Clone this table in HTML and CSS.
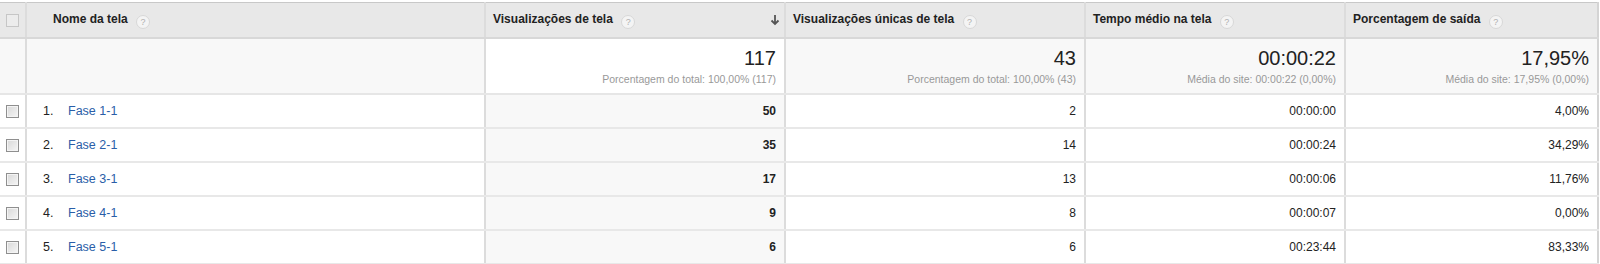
FILE: index.html
```html
<!DOCTYPE html>
<html>
<head>
<meta charset="utf-8">
<link rel="stylesheet" href="styles.css">
</head>
<body>
<table class="report">
  <colgroup>
    <col class="c-check"><col class="c-name"><col class="c-views"><col class="c-unique"><col class="c-time"><col class="c-exit">
  </colgroup>
  <thead>
    <tr class="head">
      <th class="chk"><span class="box box-head"></span></th>
      <th class="name-h">Nome da tela <span class="help">?</span></th>
      <th class="sorted-h"><div class="hwrap"><span>Visualizações de tela <span class="help">?</span></span><svg class="arrow" width="10" height="12" viewBox="0 0 10 12"><path d="M5 1v9M1.5 6.5L5 10l3.5-3.5" fill="none" stroke="#555" stroke-width="1.8"/></svg></div></th>
      <th>Visualizações únicas de tela <span class="help">?</span></th>
      <th>Tempo médio na tela <span class="help">?</span></th>
      <th>Porcentagem de saída <span class="help">?</span></th>
    </tr>
  </thead>
  <tbody>
    <tr class="totals">
      <td class="chk"></td>
      <td></td>
      <td class="sorted"><div class="big">117</div><div class="sub">Porcentagem do total: 100,00% (117)</div></td>
      <td><div class="big">43</div><div class="sub">Porcentagem do total: 100,00% (43)</div></td>
      <td><div class="big">00:00:22</div><div class="sub">Média do site: 00:00:22 (0,00%)</div></td>
      <td><div class="big">17,95%</div><div class="sub">Média do site: 17,95% (0,00%)</div></td>
    </tr>
    <tr class="row">
      <td class="chk"><span class="box"></span></td>
      <td class="name"><span class="idx">1.</span><a href="#">Fase 1-1</a></td>
      <td class="sorted num">50</td><td class="num">2</td><td class="num">00:00:00</td><td class="num">4,00%</td>
    </tr>
    <tr class="row">
      <td class="chk"><span class="box"></span></td>
      <td class="name"><span class="idx">2.</span><a href="#">Fase 2-1</a></td>
      <td class="sorted num">35</td><td class="num">14</td><td class="num">00:00:24</td><td class="num">34,29%</td>
    </tr>
    <tr class="row">
      <td class="chk"><span class="box"></span></td>
      <td class="name"><span class="idx">3.</span><a href="#">Fase 3-1</a></td>
      <td class="sorted num">17</td><td class="num">13</td><td class="num">00:00:06</td><td class="num">11,76%</td>
    </tr>
    <tr class="row">
      <td class="chk"><span class="box"></span></td>
      <td class="name"><span class="idx">4.</span><a href="#">Fase 4-1</a></td>
      <td class="sorted num">9</td><td class="num">8</td><td class="num">00:00:07</td><td class="num">0,00%</td>
    </tr>
    <tr class="row">
      <td class="chk"><span class="box"></span></td>
      <td class="name"><span class="idx">5.</span><a href="#">Fase 5-1</a></td>
      <td class="sorted num">6</td><td class="num">6</td><td class="num">00:23:44</td><td class="num">83,33%</td>
    </tr>
  </tbody>
</table>
</body>
</html>
```
FILE: styles.css
```css
html, body {
  margin: 0;
  padding: 0;
  background: #fff;
  font-family: "Liberation Sans", Arial, sans-serif;
  color: #222;
}
.report {
  margin-top: 2px;
  width: 1598px;
  border-collapse: collapse;
  table-layout: fixed;
  border-top: 1px solid #c8c8c8;
  border-right: 2px solid #d4d4d4;
}
.c-check { width: 26px; }
.c-name { width: 459px; }
.c-views { width: 300px; }
.c-unique { width: 300px; }
.c-time { width: 260px; }
.c-exit { width: 253px; }

th, td {
  padding: 0;
  border-left: 2px solid #dcdcdc;
}
th:first-child, td:first-child { border-left: none; }

.head th {
  height: 34px;
  background: #e8e8e8;
  border-bottom: 2px solid #d8d8d8;
  font-size: 12px;
  font-weight: bold;
  color: #222;
  text-align: left;
  padding-left: 7px;
  white-space: nowrap;
}
.head th.chk { padding-left: 0; text-align: center; }
.head th.name-h { padding-left: 26px; }
.hwrap {
  display: flex;
  align-items: center;
  justify-content: space-between;
  padding-right: 4px;
}
.arrow { display: block; }

.help {
  display: inline-block;
  width: 12px;
  height: 12px;
  line-height: 12px;
  border-radius: 50%;
  background: #f4f4f4;
  border: 1px solid #d8d8d8;
  color: #b0b0b0;
  font-size: 9px;
  font-weight: normal;
  text-align: center;
  margin-left: 5px;
  vertical-align: -2px;
}

.chk { text-align: center; }
.box {
  display: inline-block;
  width: 11px;
  height: 11px;
  border: 1px solid #8f8f8f;
  background: linear-gradient(135deg, #d8d8d8, #f6f6f6);
  vertical-align: middle;
  box-shadow: inset 0 0 0 1px #f4f4f4;
}
.box-head {
  border-color: #c6c6c6;
  background: #ececec;
  box-shadow: none;
}

.totals td {
  height: 54px;
  background: #f8f8f8;
  border-bottom: 2px solid #e6e6e6;
  text-align: right;
  padding-right: 8px;
  vertical-align: top;
}
.totals td.chk { padding-right: 0; }
.totals td.sorted { background: #fff; }
.big {
  font-size: 20px;
  line-height: 22px;
  margin-top: 8px;
  color: #222;
}
.sub {
  font-size: 10.5px;
  color: #999;
  margin-top: 4px;
  white-space: nowrap;
}

.row td {
  height: 32px;
  border-bottom: 2px solid #e8e8e8;
  font-size: 12px;
  background: #fff;
}
.row td.sorted { background: #f8f8f8; font-weight: bold; }
.row td.num {
  text-align: right;
  padding-right: 8px;
}
.row td.name {
  padding-left: 16px;
  font-size: 12.5px;
}
.idx {
  display: inline-block;
  width: 25px;
  color: #222;
}
.name a {
  color: #2a5ea8;
  text-decoration: none;
}
```
